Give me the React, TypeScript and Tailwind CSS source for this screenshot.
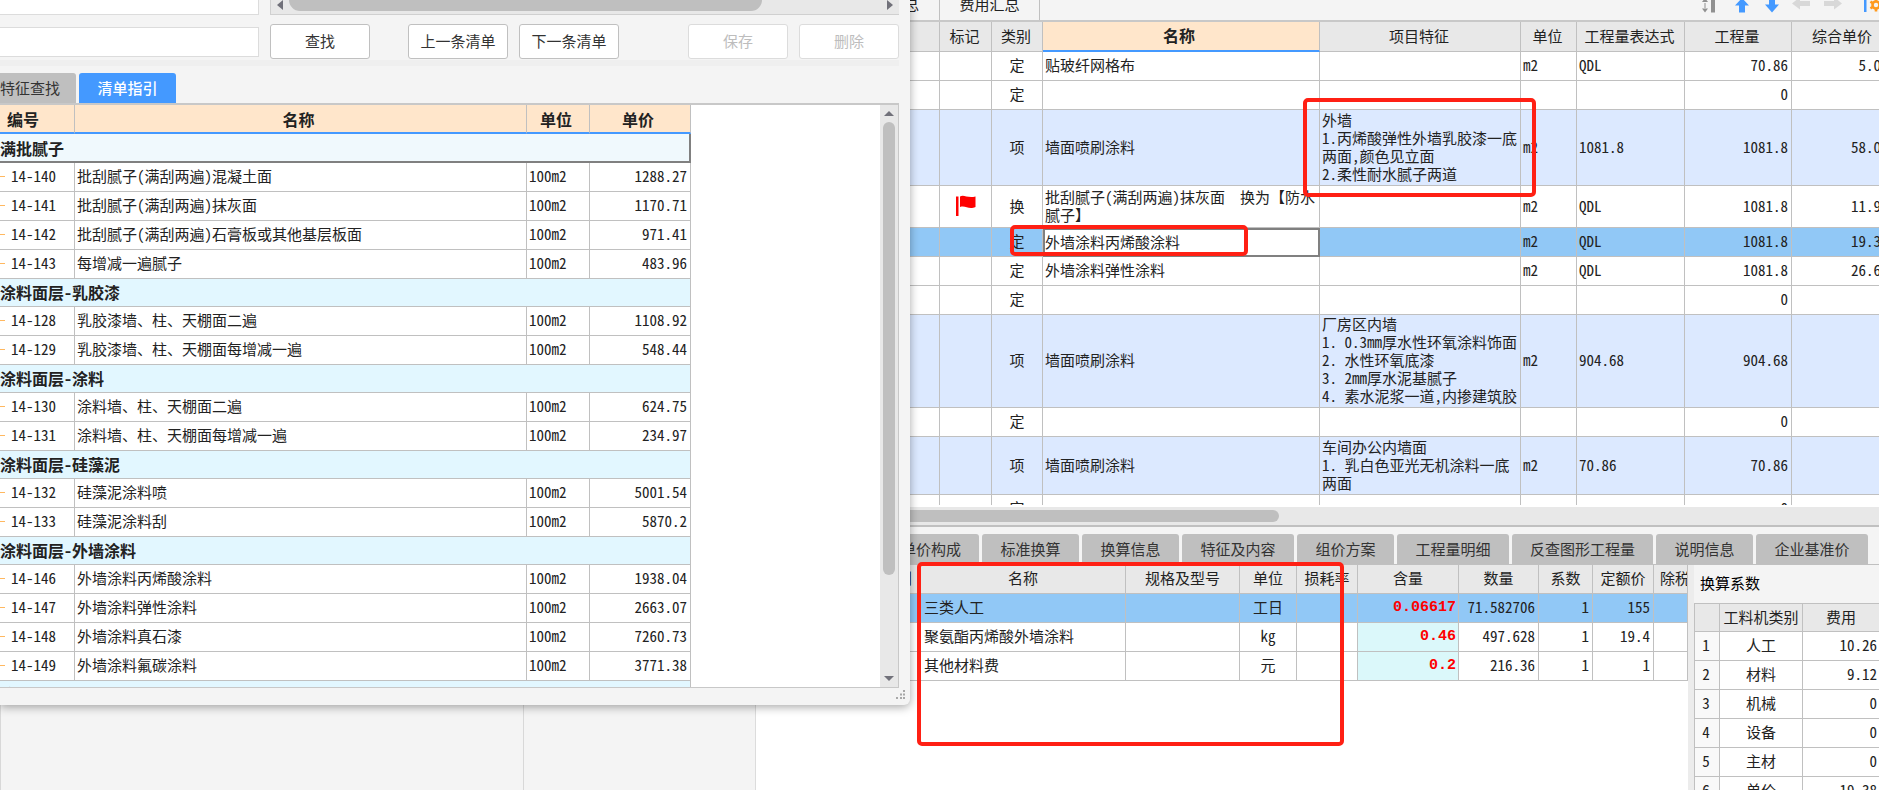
import React from "react";

const cjk = "font-['Noto_Sans_CJK_SC',sans-serif]";
const grid = "border-[#c0c0c0]";

type GuideRow = { group: string } | { code: string; name: string; price: string };

const guideRows: GuideRow[] = [
  { code: "14-140", name: "批刮腻子(满刮两遍)混凝土面", price: "1288.27" },
  { code: "14-141", name: "批刮腻子(满刮两遍)抹灰面", price: "1170.71" },
  { code: "14-142", name: "批刮腻子(满刮两遍)石膏板或其他基层板面", price: "971.41" },
  { code: "14-143", name: "每增减一遍腻子", price: "483.96" },
  { group: "涂料面层-乳胶漆" },
  { code: "14-128", name: "乳胶漆墙、柱、天棚面二遍", price: "1108.92" },
  { code: "14-129", name: "乳胶漆墙、柱、天棚面每增减一遍", price: "548.44" },
  { group: "涂料面层-涂料" },
  { code: "14-130", name: "涂料墙、柱、天棚面二遍", price: "624.75" },
  { code: "14-131", name: "涂料墙、柱、天棚面每增减一遍", price: "234.97" },
  { group: "涂料面层-硅藻泥" },
  { code: "14-132", name: "硅藻泥涂料喷", price: "5001.54" },
  { code: "14-133", name: "硅藻泥涂料刮", price: "5870.2" },
  { group: "涂料面层-外墙涂料" },
  { code: "14-146", name: "外墙涂料丙烯酸涂料", price: "1938.04" },
  { code: "14-147", name: "外墙涂料弹性涂料", price: "2663.07" },
  { code: "14-148", name: "外墙涂料真石漆", price: "7260.73" },
  { code: "14-149", name: "外墙涂料氟碳涂料", price: "3771.38" },
  { group: "涂料面层-真石漆" },
];

type BillRow = {
  kind: string;
  height: string;
  flag?: boolean;
  name?: string[];
  feature?: string[];
  unit?: string;
  expr?: string;
  qty?: string;
  price?: string;
  selected?: boolean;
};

const billRows: BillRow[] = [
  { kind: "定", height: "h-[29px]", name: ["贴玻纤网格布"], unit: "m2", expr: "QDL", qty: "70.86", price: "5.0" },
  { kind: "定", height: "h-[29px]", qty: "0" },
  {
    kind: "项",
    height: "h-[76px]",
    name: ["墙面喷刷涂料"],
    feature: ["外墙", "1.丙烯酸弹性外墙乳胶漆一底", "两面,颜色见立面", "2.柔性耐水腻子两道"],
    unit: "m2",
    expr: "1081.8",
    qty: "1081.8",
    price: "58.0",
  },
  {
    kind: "换",
    height: "h-[42px]",
    flag: true,
    name: ["批刮腻子(满刮两遍)抹灰面\u00a0\u00a0换为【防水", "腻子】"],
    unit: "m2",
    expr: "QDL",
    qty: "1081.8",
    price: "11.9",
  },
  { kind: "定", height: "h-[29px]", name: ["外墙涂料丙烯酸涂料"], unit: "m2", expr: "QDL", qty: "1081.8", price: "19.3", selected: true },
  { kind: "定", height: "h-[29px]", name: ["外墙涂料弹性涂料"], unit: "m2", expr: "QDL", qty: "1081.8", price: "26.6" },
  { kind: "定", height: "h-[29px]", qty: "0" },
  {
    kind: "项",
    height: "h-[93px]",
    name: ["墙面喷刷涂料"],
    feature: ["厂房区内墙", "1. 0.3mm厚水性环氧涂料饰面", "2. 水性环氧底漆", "3. 2mm厚水泥基腻子", "4. 素水泥浆一道,内掺建筑胶"],
    unit: "m2",
    expr: "904.68",
    qty: "904.68",
  },
  { kind: "定", height: "h-[29px]", qty: "0" },
  {
    kind: "项",
    height: "h-[58px]",
    name: ["墙面喷刷涂料"],
    feature: ["车间办公内墙面", "1. 乳白色亚光无机涂料一底", "两面"],
    unit: "m2",
    expr: "70.86",
    qty: "70.86",
  },
  { kind: "定", height: "h-[29px]", qty: "0" },
];

const detailTabs = [
  { label: "标准换算", width: "w-[97px]" },
  { label: "换算信息", width: "w-[97px]" },
  { label: "特征及内容", width: "w-[112px]" },
  { label: "组价方案", width: "w-[97px]" },
  { label: "工程量明细", width: "w-[112px]" },
  { label: "反查图形工程量", width: "w-[141px]" },
  { label: "说明信息", width: "w-[97px]" },
  { label: "企业基准价", width: "w-[112px]" },
];

const resources = [
  { name: "三类人工", unit: "工日", content: "0.06617", qty: "71.582706", factor: "1", price: "155", selected: true },
  { name: "聚氨酯丙烯酸外墙涂料", unit: "kg", content: "0.46", qty: "497.628", factor: "1", price: "19.4", selected: false },
  { name: "其他材料费", unit: "元", content: "0.2", qty: "216.36", factor: "1", price: "1", selected: false },
];

const factors = [
  ["人工", "10.26"],
  ["材料", "9.12"],
  ["机械", "0"],
  ["设备", "0"],
  ["主材", "0"],
  ["单价", "19.38"],
];

function DialogButton({ children, disabled }: { children: React.ReactNode; disabled?: boolean }) {
  return (
    <button
      type="button"
      disabled={disabled}
      className={`h-[35px] w-[100px] rounded-[3px] border bg-white text-[15px] ${
        disabled ? "border-[#dcdcdc] text-[#bdbdbd]" : "border-[#c0c0c0] text-[#333]"
      }`}
    >
      {children}
    </button>
  );
}

function Triangle({ className, points }: { className: string; points: string }) {
  return (
    <svg className={className} viewBox="0 0 10 10" preserveAspectRatio="none" aria-hidden="true">
      <polygon points={points} fill="#71717a" />
    </svg>
  );
}

function GuideTable() {
  const head = "border-b-2 border-r border-b-[#4499ff] border-r-[#c0c0c0] bg-[#ffe6cb] p-0 text-center text-base leading-5 font-bold";
  const cell = `border-b border-r ${grid} h-[29px] p-0 pb-0.5 leading-5`;
  return (
    <table className="w-[691px] shrink-0 table-fixed border-separate border-spacing-0 self-start text-[15px] whitespace-nowrap text-[#222]">
      <colgroup>
        <col className="w-[75px]" />
        <col />
        <col className="w-[63px]" />
        <col className="w-[101px]" />
      </colgroup>
      <thead>
        <tr className="h-[29px]">
          <th className={`${head} pr-7`}>编号</th>
          <th className={`${head} pr-1`}>名称</th>
          <th className={`${head} pr-1`}>单位</th>
          <th className={`${head} pr-1`}>单价</th>
        </tr>
      </thead>
      <tbody>
        <tr>
          <td colSpan={4} className="h-[29px] border-r-2 border-b-2 border-[#808080] bg-[#f0f9fd] p-0 text-base leading-5 font-bold">
            满批腻子
          </td>
        </tr>
        {guideRows.map((row) =>
          "group" in row ? (
            <tr key={row.group}>
              <td colSpan={4} className={`h-[28px] border-r border-b ${grid} bg-[#e2f7ff] p-0 pb-0.5 text-base leading-5 font-bold`}>
                {row.group}
              </td>
            </tr>
          ) : (
            <tr key={row.code} className="bg-white">
              <td className={cell}>
                <div className="flex items-center gap-1.5">
                  <span className="h-px w-[5px] bg-[#ffb860]" />
                  {row.code}
                </div>
              </td>
              <td className={`${cell} pl-0.5`}>{row.name}</td>
              <td className={`${cell} pl-0.5`}>100m2</td>
              <td className={`${cell} pr-[3px] text-right`}>{row.price}</td>
            </tr>
          ),
        )}
      </tbody>
    </table>
  );
}

function GuideDialog() {
  return (
    <section
      aria-label="清单指引"
      className="absolute top-0 left-0 flex h-[705px] w-[910px] flex-col rounded-br-md bg-[#f4f4f4] pr-[11px] shadow-[0_2px_10px_rgba(0,0,0,0.35)]"
    >
      <div className="flex h-[15px] shrink-0 gap-[11px]">
        <input aria-label="清单名称" className="h-[15px] w-[259px] border-r border-b border-[#dcdcdc] bg-white" />
        <div className="flex flex-1 items-start border-b border-l border-[#d0d0d0] bg-[#e8e8e8]">
          <Triangle className="mr-1.5 ml-1.5 h-2.5 w-[6px]" points="10,0 10,10 0,5" />
          <div className="h-[11px] w-[473px] rounded-b-full bg-[#bfbfbf]" />
          <Triangle className="mr-1.5 ml-auto h-2.5 w-[6px]" points="0,0 0,10 10,5" />
        </div>
      </div>
      <div className="flex h-[45px] shrink-0 items-center pt-2">
        <input aria-label="查找内容" className="mr-[11px] h-[30px] w-[259px] border border-l-0 border-[#dcdcdc] bg-white" />
        <DialogButton>查找</DialogButton>
        <div className="mr-auto ml-[38px] flex gap-[11px]">
          <DialogButton>上一条清单</DialogButton>
          <DialogButton>下一条清单</DialogButton>
        </div>
        <div className="flex gap-[11px]">
          <DialogButton disabled>保存</DialogButton>
          <DialogButton disabled>删除</DialogButton>
        </div>
      </div>
      <div className="h-1.5 shrink-0 bg-[#efefef]" />
      <div className="flex h-[37px] shrink-0 items-end gap-[3px] text-[15px]">
        <button type="button" className="h-[30px] w-[76px] rounded-tr-[3px] bg-[#bfbfbf] pr-[18px] text-right whitespace-nowrap text-[#333]">
          特征查找
        </button>
        <button type="button" className="h-[30px] w-[97px] rounded-t-[3px] bg-[#4499ff] font-medium text-white">
          清单指引
        </button>
      </div>
      <div className="flex min-h-0 flex-1 overflow-hidden border-t-2 border-r border-b border-[#c8c8c8] bg-white">
        <GuideTable />
        <div className="ml-auto flex w-[18px] flex-col items-center bg-[#e8e8e8] py-1.5">
          <Triangle className="h-[5px] w-2.5" points="0,10 10,10 5,0" />
          <div className="mt-1.5 mb-auto h-[453px] w-3 rounded-full bg-[#bfbfbf]" />
          <Triangle className="h-[5px] w-2.5" points="0,0 10,0 5,10" />
        </div>
      </div>
      <div className="-mr-[11px] flex h-[17px] shrink-0 justify-end pt-0.5 pr-1">
        <svg className="h-2.5 w-2.5" viewBox="0 0 10 10" fill="#a8a8a8" aria-hidden="true">
          <path d="M7 0h2v2H7zM4 3.500h2v2H4zM7 3.500h2v2H7zM0 7h2v2H0zM4 7h2v2H4zM7 7h2v2H7z" />
        </svg>
      </div>
    </section>
  );
}

function Toolbar() {
  return (
    <div className="flex h-[22px] shrink-0 overflow-hidden border-b-2 border-[#c8c8c8] bg-[#f4f4f4] text-[15px] text-[#222]">
      <button type="button" className="-mt-4 h-9 w-[184px] border-r border-[#c0c0c0] pt-1 pr-5 text-right">
        总
      </button>
      <button type="button" className="-mt-4 h-9 w-[100px] border-r border-[#c0c0c0] pt-1">
        费用汇总
      </button>
      <svg className="ml-auto h-5 w-[178px]" viewBox="0 0 178 20" aria-hidden="true">
        <g fill="#909090">
          <path d="M1 2l3-4 3 4zM1 8.500l3 4 3-4zM3.500 3h1v5h-1z" />
          <path d="M10 0h4v12.500h-4z" />
        </g>
        <path d="M34 5.500L41-2l7 7.500h-4V12.500h-6V5.500z" fill="#4499ff" />
        <path d="M64 4.500h4V-2h6v6.500h4l-7 8z" fill="#4499ff" />
        <path d="M91 3.500L99-3v4h10v5H99v3.500z" fill="#d8d8d8" />
        <path d="M141 3.500L133-3v4h-10v5h10v3.500z" fill="#d8d8d8" />
        <path d="M163 0h2.500v12H163z" fill="#4499ff" />
        <g stroke="#ff9a1f" fill="none">
          <circle cx="175" cy="5" r="3.500" strokeWidth="2.600" />
          <path d="M175 8v3.500M175 2v-3.500M172.400 6.500l-3 1.800M172.400 3.500l-3-1.800M177.600 6.500l3 1.800M177.600 3.500l3-1.800" strokeWidth="2.600" />
        </g>
      </svg>
    </div>
  );
}

function BillTable() {
  const head = `border-b border-r ${grid} bg-[#e8e8e8] p-0 pb-0.5 pr-0.5 leading-5 font-normal`;
  const cell = `border-b border-r ${grid} p-0 pb-0.5 leading-[18px]`;
  return (
    <table className="w-full table-fixed border-separate border-spacing-0 text-[15px] whitespace-nowrap text-[#222]">
      <colgroup>
        <col className="w-[184px]" />
        <col className="w-[52px]" />
        <col className="w-[51px]" />
        <col className="w-[277px]" />
        <col className="w-[201px]" />
        <col className="w-[56px]" />
        <col className="w-[108px]" />
        <col className="w-[107px]" />
        <col />
      </colgroup>
      <thead>
        <tr className="h-[30px]">
          <th className={head} />
          <th className={head}>标记</th>
          <th className={head}>类别</th>
          <th className="border-r border-b-2 border-r-[#c0c0c0] border-b-[#4499ff] bg-[#ffe6cb] p-0 pr-1 pb-0.5 text-base leading-5 font-bold">名称</th>
          <th className={head}>项目特征</th>
          <th className={head}>单位</th>
          <th className={head}>工程量表达式</th>
          <th className={head}>工程量</th>
          <th className={`${head} border-r-0 pl-5 text-left`}>综合单价</th>
        </tr>
      </thead>
      <tbody>
        {billRows.map((row, i) => (
          <tr key={i} className={`${row.height} ${row.selected ? "bg-[#91c8f6]" : row.kind === "项" ? "bg-[#dce9ff]" : "bg-white"}`}>
            <td className={cell} />
            <td className={cell}>
              {row.flag && (
                <svg className="mx-auto h-[21px] w-5" viewBox="0 0 20 21" fill="#ff0000" role="img" aria-label="标记">
                  <path d="M0 1.500h2.500V21H0z" />
                  <path d="M4 1.500c4-2.500 7 2 15.500 0v10.500c-7 3-10-2-15.500 0z" />
                </svg>
              )}
            </td>
            <td className={`${cell} text-center`}>{row.kind}</td>
            <td className={row.selected ? "border-2 border-[#808080] bg-white p-0 pb-0.5 leading-[18px]" : `${cell} pl-0.5`}>
              {row.name?.map((line) => <div key={line}>{line}</div>)}
            </td>
            <td className={`${cell} pl-0.5`}>{row.feature?.map((line) => <div key={line}>{line}</div>)}</td>
            <td className={`${cell} pl-0.5`}>{row.unit}</td>
            <td className={`${cell} pl-0.5`}>{row.expr}</td>
            <td className={`${cell} pr-[3px] text-right`}>{row.qty}</td>
            <td className={`border-b ${grid} overflow-hidden p-0 pb-0.5 pl-9 leading-[18px]`}>
              <div className="-mr-0.5 text-right">{row.price}</div>
            </td>
          </tr>
        ))}
      </tbody>
    </table>
  );
}

function ResourceTable() {
  const head = `border-b border-r ${grid} bg-[#e8e8e8] p-0 pb-0.5 leading-5 font-normal`;
  const cell = `border-b border-r ${grid} p-0 pb-0.5 leading-5`;
  return (
    <table className="w-full table-fixed border-separate border-spacing-0 text-[15px] whitespace-nowrap text-[#222]">
      <colgroup>
        <col className="w-[165px]" />
        <col className="w-[205px]" />
        <col className="w-[114px]" />
        <col className="w-[57px]" />
        <col className="w-[61px]" />
        <col className="w-[101px]" />
        <col className="w-[80px]" />
        <col className="w-[54px]" />
        <col className="w-[61px]" />
        <col />
      </colgroup>
      <thead>
        <tr className="h-[29px]">
          <th className={`${head} pr-2 text-right`}>别</th>
          <th className={head}>名称</th>
          <th className={head}>规格及型号</th>
          <th className={head}>单位</th>
          <th className={head}>损耗率</th>
          <th className={head}>含量</th>
          <th className={head}>数量</th>
          <th className={head}>系数</th>
          <th className={head}>定额价</th>
          <th className={`${head} overflow-hidden pl-1.5 text-left`}>除税</th>
        </tr>
      </thead>
      <tbody>
        {resources.map((row) => (
          <tr key={row.name} className={`h-[29px] ${row.selected ? "bg-[#91c8f6]" : "bg-white"}`}>
            <td className={cell} />
            <td className={`${cell} pl-[3px]`}>{row.name}</td>
            <td className={cell} />
            <td className={`${cell} text-center`}>{row.unit}</td>
            <td className={cell} />
            <td
              className={`border-r border-b ${grid} p-0 pr-0.5 text-right font-['Liberation_Mono',monospace] leading-5 font-bold text-[#ff0000] ${
                row.selected ? "" : "bg-[#dbf8fa]"
              }`}
            >
              {row.content}
            </td>
            <td className={`${cell} pr-[3px] text-right`}>{row.qty}</td>
            <td className={`${cell} pr-[3px] text-right`}>{row.factor}</td>
            <td className={`${cell} pr-[3px] text-right`}>{row.price}</td>
            <td className={cell} />
          </tr>
        ))}
      </tbody>
    </table>
  );
}

function FactorPanel() {
  const cell = `border-b border-r ${grid} p-0 pb-0.5 leading-5`;
  return (
    <aside className="w-[191px] shrink-0 overflow-hidden border-l-[6px] border-[#ececec] bg-[#f4f4f4]">
      <h2 className="flex h-[38px] items-center pb-0.5 pl-1.5 text-[15px] text-black">换算系数</h2>
      <table className="w-full table-fixed border-separate border-spacing-0 border-t border-l border-[#c0c0c0] bg-white text-[15px] whitespace-nowrap text-[#222]">
        <colgroup>
          <col className="w-[25px]" />
          <col className="w-[83px]" />
          <col />
        </colgroup>
        <thead>
          <tr className="h-[28px] bg-[#e8e8e8]">
            <th className={cell} />
            <th className={`${cell} font-normal`}>工料机类别</th>
            <th className={`${cell} border-r-0 font-normal`}>费用</th>
          </tr>
        </thead>
        <tbody>
          {factors.map(([name, fee], i) => (
            <tr key={name} className="h-[29px]">
              <td className={`${cell} bg-[#f9f9f9] pr-0.5 text-center`}>{i + 1}</td>
              <td className={`${cell} text-center`}>{name}</td>
              <td className={`${cell} border-r-0 pr-0.5 text-right`}>{fee}</td>
            </tr>
          ))}
        </tbody>
      </table>
    </aside>
  );
}

export default function App() {
  return (
    <div className={`relative flex h-screen w-full overflow-hidden bg-[#f4f4f4] ${cjk} [font-feature-settings:'hwid']`}>
      <div className="w-[524px] shrink-0 border-x border-[#d8d8d8]" />
      <div className="w-[232px] shrink-0 border-r border-[#dcdcdc]" />
      <main className="flex min-w-0 flex-1 flex-col bg-white">
        <Toolbar />
        <div className="h-[483px] shrink-0 overflow-hidden">
          <BillTable />
        </div>
        <div className="mt-0.5 flex h-[18px] shrink-0 items-center bg-[#e8e8e8]">
          <div className="h-3 w-[523px] rounded-full bg-[#bfbfbf]" />
        </div>
        <div className="flex h-[40px] shrink-0 items-end gap-[3px] border-t-2 border-b border-t-[#c0c0c0] border-b-[#c0c0c0] bg-[#f4f4f4] text-[15px] text-[#333]">
          <button type="button" className="h-[30px] w-[223px] rounded-t-[3px] bg-[#bfbfbf] pr-[18px] text-right">
            单价构成
          </button>
          {detailTabs.map((tab) => (
            <button key={tab.label} type="button" className={`h-[30px] ${tab.width} shrink-0 rounded-t-[3px] bg-[#bfbfbf]`}>
              {tab.label}
            </button>
          ))}
        </div>
        <div className="flex min-h-0 flex-1">
          <div className="min-w-0 flex-1 overflow-hidden">
            <ResourceTable />
          </div>
          <FactorPanel />
        </div>
      </main>
      <GuideDialog />
      <div className="absolute top-[98px] left-[1303px] h-[99px] w-[233px] rounded-[5px] border-4 border-[#ff2014]" />
      <div className="absolute top-[225px] left-[1010px] h-[31px] w-[238px] rounded-[5px] border-4 border-[#ff2014]" />
      <div className="absolute top-[562px] left-[917px] h-[184px] w-[427px] rounded-[5px] border-4 border-[#ff2014]" />
    </div>
  );
}
